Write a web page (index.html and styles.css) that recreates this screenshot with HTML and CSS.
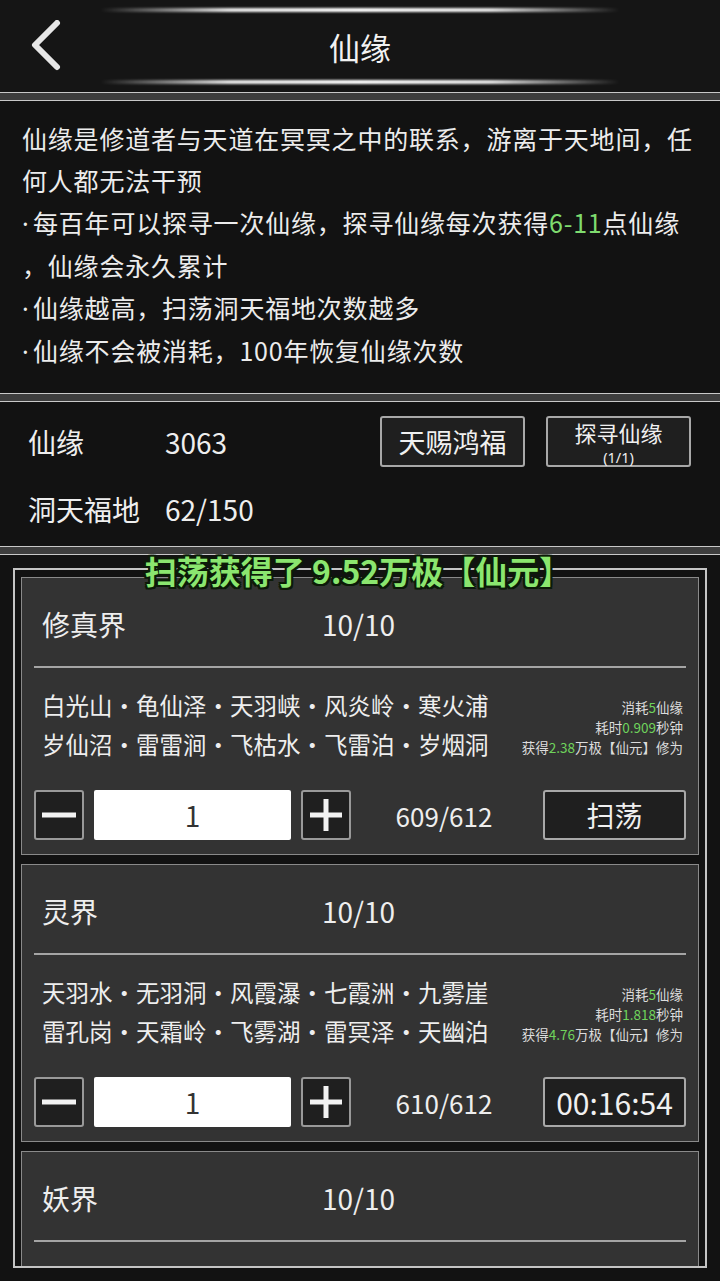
FILE: index.html
```html
<!DOCTYPE html>
<html lang="zh">
<head>
    <meta charset="UTF-8">
    <meta name="viewport" content="width=device-width, initial-scale=1.0">
    <title>仙缘</title>
    <link rel="stylesheet" href="styles.css">
</head>
<body>
    <div class="header">
        <div class="glow"></div>
        <div class="title-row">
            <div class="back">
                <svg width="40" height="52" viewBox="0 0 40 52">
                    <polyline points="30,3 8,25 30,47" fill="none" stroke="#e6e6e6" stroke-width="6" stroke-linecap="round" stroke-linejoin="round"/>
                </svg>
            </div>
            <h1>仙缘</h1>
            <div></div>
        </div>
        <div class="glow"></div>
    </div>
    <div class="sep"></div>

    <div class="desc">
        <div>仙缘是修道者与天道在冥冥之中的联系，游离于天地间，任</div>
        <div>何人都无法干预</div>
        <div><span class="dot">·</span>每百年可以探寻一次仙缘，探寻仙缘每次获得<span class="green">6-11</span>点仙缘</div>
        <div>，仙缘会永久累计</div>
        <div><span class="dot">·</span>仙缘越高，扫荡洞天福地次数越多</div>
        <div><span class="dot">·</span>仙缘不会被消耗，100年恢复仙缘次数</div>
    </div>
    <div class="sep"></div>

    <div class="stats">
        <div class="stat-row">
            <span class="stat-label">仙缘</span>
            <span class="stat-value">3063</span>
            <div class="stat-buttons">
                <button class="btn">天赐鸿福</button>
                <button class="btn btn-two"><span>探寻仙缘</span><small>(1/1)</small></button>
            </div>
        </div>
        <div class="stat-row">
            <span class="stat-label">洞天福地</span>
            <span class="stat-value">62/150</span>
        </div>
    </div>
    <div class="sep"></div>

    <div class="lower">
        <div class="toast">扫荡获得了 9.52万极【仙元】</div>
        <div class="frame">
            <div class="card">
                <div class="card-head">
                    <span class="card-name">修真界</span>
                    <span class="card-count">10/10</span>
                </div>
                <div class="divider"></div>
                <div class="card-body">
                    <div class="places">
                        <div>白光山·龟仙泽·天羽峡·风炎岭·寒火浦</div>
                        <div>岁仙沼·雷雷涧·飞枯水·飞雷泊·岁烟洞</div>
                    </div>
                    <div class="info">
                        <div>消耗<span class="green">5</span>仙缘</div>
                        <div>耗时<span class="green">0.909</span>秒钟</div>
                        <div>获得<span class="green">2.38</span>万极【仙元】修为</div>
                    </div>
                </div>
                <div class="controls">
                    <button class="step">
                        <svg width="40" height="40" viewBox="0 0 40 40"><rect x="3" y="17.5" width="34" height="5" fill="#f2f2f2"/></svg>
                    </button>
                    <div class="amount">1</div>
                    <button class="step">
                        <svg width="40" height="40" viewBox="0 0 40 40"><rect x="4" y="17.5" width="32" height="5" fill="#f2f2f2"/><rect x="17.5" y="4" width="5" height="32" fill="#f2f2f2"/></svg>
                    </button>
                    <span class="total">609/612</span>
                    <button class="btn action">扫荡</button>
                </div>
            </div>

            <div class="card">
                <div class="card-head">
                    <span class="card-name">灵界</span>
                    <span class="card-count">10/10</span>
                </div>
                <div class="divider"></div>
                <div class="card-body">
                    <div class="places">
                        <div>天羽水·无羽洞·风霞瀑·七霞洲·九雾崖</div>
                        <div>雷孔岗·天霜岭·飞雾湖·雷冥泽·天幽泊</div>
                    </div>
                    <div class="info">
                        <div>消耗<span class="green">5</span>仙缘</div>
                        <div>耗时<span class="green">1.818</span>秒钟</div>
                        <div>获得<span class="green">4.76</span>万极【仙元】修为</div>
                    </div>
                </div>
                <div class="controls">
                    <button class="step">
                        <svg width="40" height="40" viewBox="0 0 40 40"><rect x="3" y="17.5" width="34" height="5" fill="#f2f2f2"/></svg>
                    </button>
                    <div class="amount">1</div>
                    <button class="step">
                        <svg width="40" height="40" viewBox="0 0 40 40"><rect x="4" y="17.5" width="32" height="5" fill="#f2f2f2"/><rect x="17.5" y="4" width="5" height="32" fill="#f2f2f2"/></svg>
                    </button>
                    <span class="total">610/612</span>
                    <button class="btn action timer">00:16:54</button>
                </div>
            </div>

            <div class="card">
                <div class="card-head">
                    <span class="card-name">妖界</span>
                    <span class="card-count">10/10</span>
                </div>
                <div class="divider"></div>
                <div class="card-body">
                    <div class="places">
                        <div>&nbsp;</div>
                        <div>&nbsp;</div>
                    </div>
                </div>
            </div>
        </div>
    </div>
</body>
</html>
```

FILE: styles.css
```css
body {
    margin: 0;
    width: 720px;
    height: 1281px;
    overflow: hidden;
    background-color: #121212;
    color: #eeeeee;
    font-family: "Noto Sans CJK SC", "Noto Sans", sans-serif;
}

.header {
    background-color: #151515;
    height: 92px;
    padding-top: 8px;
    box-sizing: border-box;
}

.glow {
    height: 4px;
    margin: 0 100px;
    background: linear-gradient(90deg, rgba(255,255,255,0), rgba(255,255,255,0.9) 25%, #fff 50%, rgba(255,255,255,0.9) 75%, rgba(255,255,255,0));
    filter: blur(1px);
}

.title-row {
    height: 68px;
    display: grid;
    grid-template-columns: 100px 1fr 100px;
    align-items: center;
}

.back {
    padding-left: 27px;
    display: flex;
}

h1 {
    margin: 0;
    text-align: center;
    font-size: 31px;
    font-weight: 400;
    color: #f2f2f2;
}

.sep {
    height: 7px;
    background-color: #3d3d3d;
    border-top: 1px solid #c8c8c8;
    border-bottom: 1px solid #c8c8c8;
}

.desc {
    height: 292px;
    box-sizing: border-box;
    padding: 16px 0 0 22px;
    font-size: 25px;
    letter-spacing: 0.8px;
    line-height: 42px;
    white-space: nowrap;
    color: #ececec;
}

.dot {
    display: inline-block;
    width: 11px;
    font-family: "Noto Sans", sans-serif;
    letter-spacing: 0;
}

.green {
    color: #7fdc6f;
}

.stats {
    height: 144px;
    box-sizing: border-box;
    padding: 14px 29px 0 28px;
    display: flex;
    flex-direction: column;
    gap: 16px;
}

.stat-row {
    height: 51px;
    display: flex;
    align-items: center;
    font-size: 28px;
}

.stat-label {
    width: 137px;
}

.stat-buttons {
    margin-left: auto;
    display: flex;
    gap: 21px;
}

.btn {
    width: 145px;
    height: 51px;
    background-color: #1f1f1f;
    color: #f0f0f0;
    border: 2px solid #a8a8a8;
    border-radius: 3px;
    font-family: inherit;
    font-size: 27px;
    padding: 0;
    display: flex;
    flex-direction: column;
    align-items: center;
    justify-content: center;
}

.btn-two span {
    font-size: 22px;
    line-height: 31px;
    flex-shrink: 0;
}

.btn-two small {
    font-family: "Noto Sans", sans-serif;
    font-size: 14.5px;
    line-height: 19px;
    flex-shrink: 0;
}

.lower {
    position: relative;
    padding: 13px 13px 0;
}

.toast {
    position: absolute;
    top: -8px;
    left: 0;
    right: 4px;
    text-align: center;
    font-size: 32px;
    font-weight: 700;
    color: #8be66f;
    z-index: 2;
    text-shadow: 2px 0 0 #0c1a08, -2px 0 0 #0c1a08, 0 2px 0 #0c1a08, 0 -2px 0 #0c1a08, 2px 2px 0 #0c1a08, -2px -2px 0 #0c1a08, 2px -2px 0 #0c1a08, -2px 2px 0 #0c1a08;
}

.frame {
    height: 700px;
    box-sizing: border-box;
    border: 2px solid #c4c4c4;
    padding: 7px 6px;
    overflow: hidden;
    display: flex;
    flex-direction: column;
    gap: 9px;
}

.card {
    flex-shrink: 0;
    background-color: #333333;
    border: 1px solid #8a8a8a;
    padding-bottom: 14px;
}

.card-head {
    height: 88px;
    padding: 3px 0 0 20px;
    box-sizing: border-box;
    display: flex;
    align-items: center;
    font-size: 28px;
}

.card-name {
    width: 280px;
}

.divider {
    height: 2px;
    margin: 0 12px;
    background-color: #a5a5a5;
}

.card-body {
    display: flex;
    align-items: center;
    justify-content: space-between;
    padding: 18px 15px 0 20px;
}

.places {
    font-size: 23.5px;
    line-height: 39px;
    white-space: nowrap;
}

.info {
    padding-top: 3px;
    font-size: 13.5px;
    line-height: 20px;
    text-align: right;
    color: #dcdcdc;
    white-space: nowrap;
}

.info .green {
    color: #6fd35c;
}

.controls {
    margin-top: 26px;
    padding: 0 12px;
    display: flex;
    align-items: center;
    gap: 10px;
}

.step {
    width: 50px;
    height: 50px;
    padding: 0;
    background-color: #1f1f1f;
    border: 2px solid #999999;
    border-radius: 3px;
    display: flex;
    align-items: center;
    justify-content: center;
}

.amount {
    width: 197px;
    height: 50px;
    background-color: #ffffff;
    border-radius: 2px;
    color: #333333;
    font-size: 28px;
    line-height: 50px;
    text-align: center;
}

.total {
    flex: 1;
    padding-right: 6px;
    text-align: center;
    font-size: 26px;
}

.action {
    width: 143px;
    height: 50px;
    font-size: 28px;
}

.timer {
    font-size: 30px;
}
```
